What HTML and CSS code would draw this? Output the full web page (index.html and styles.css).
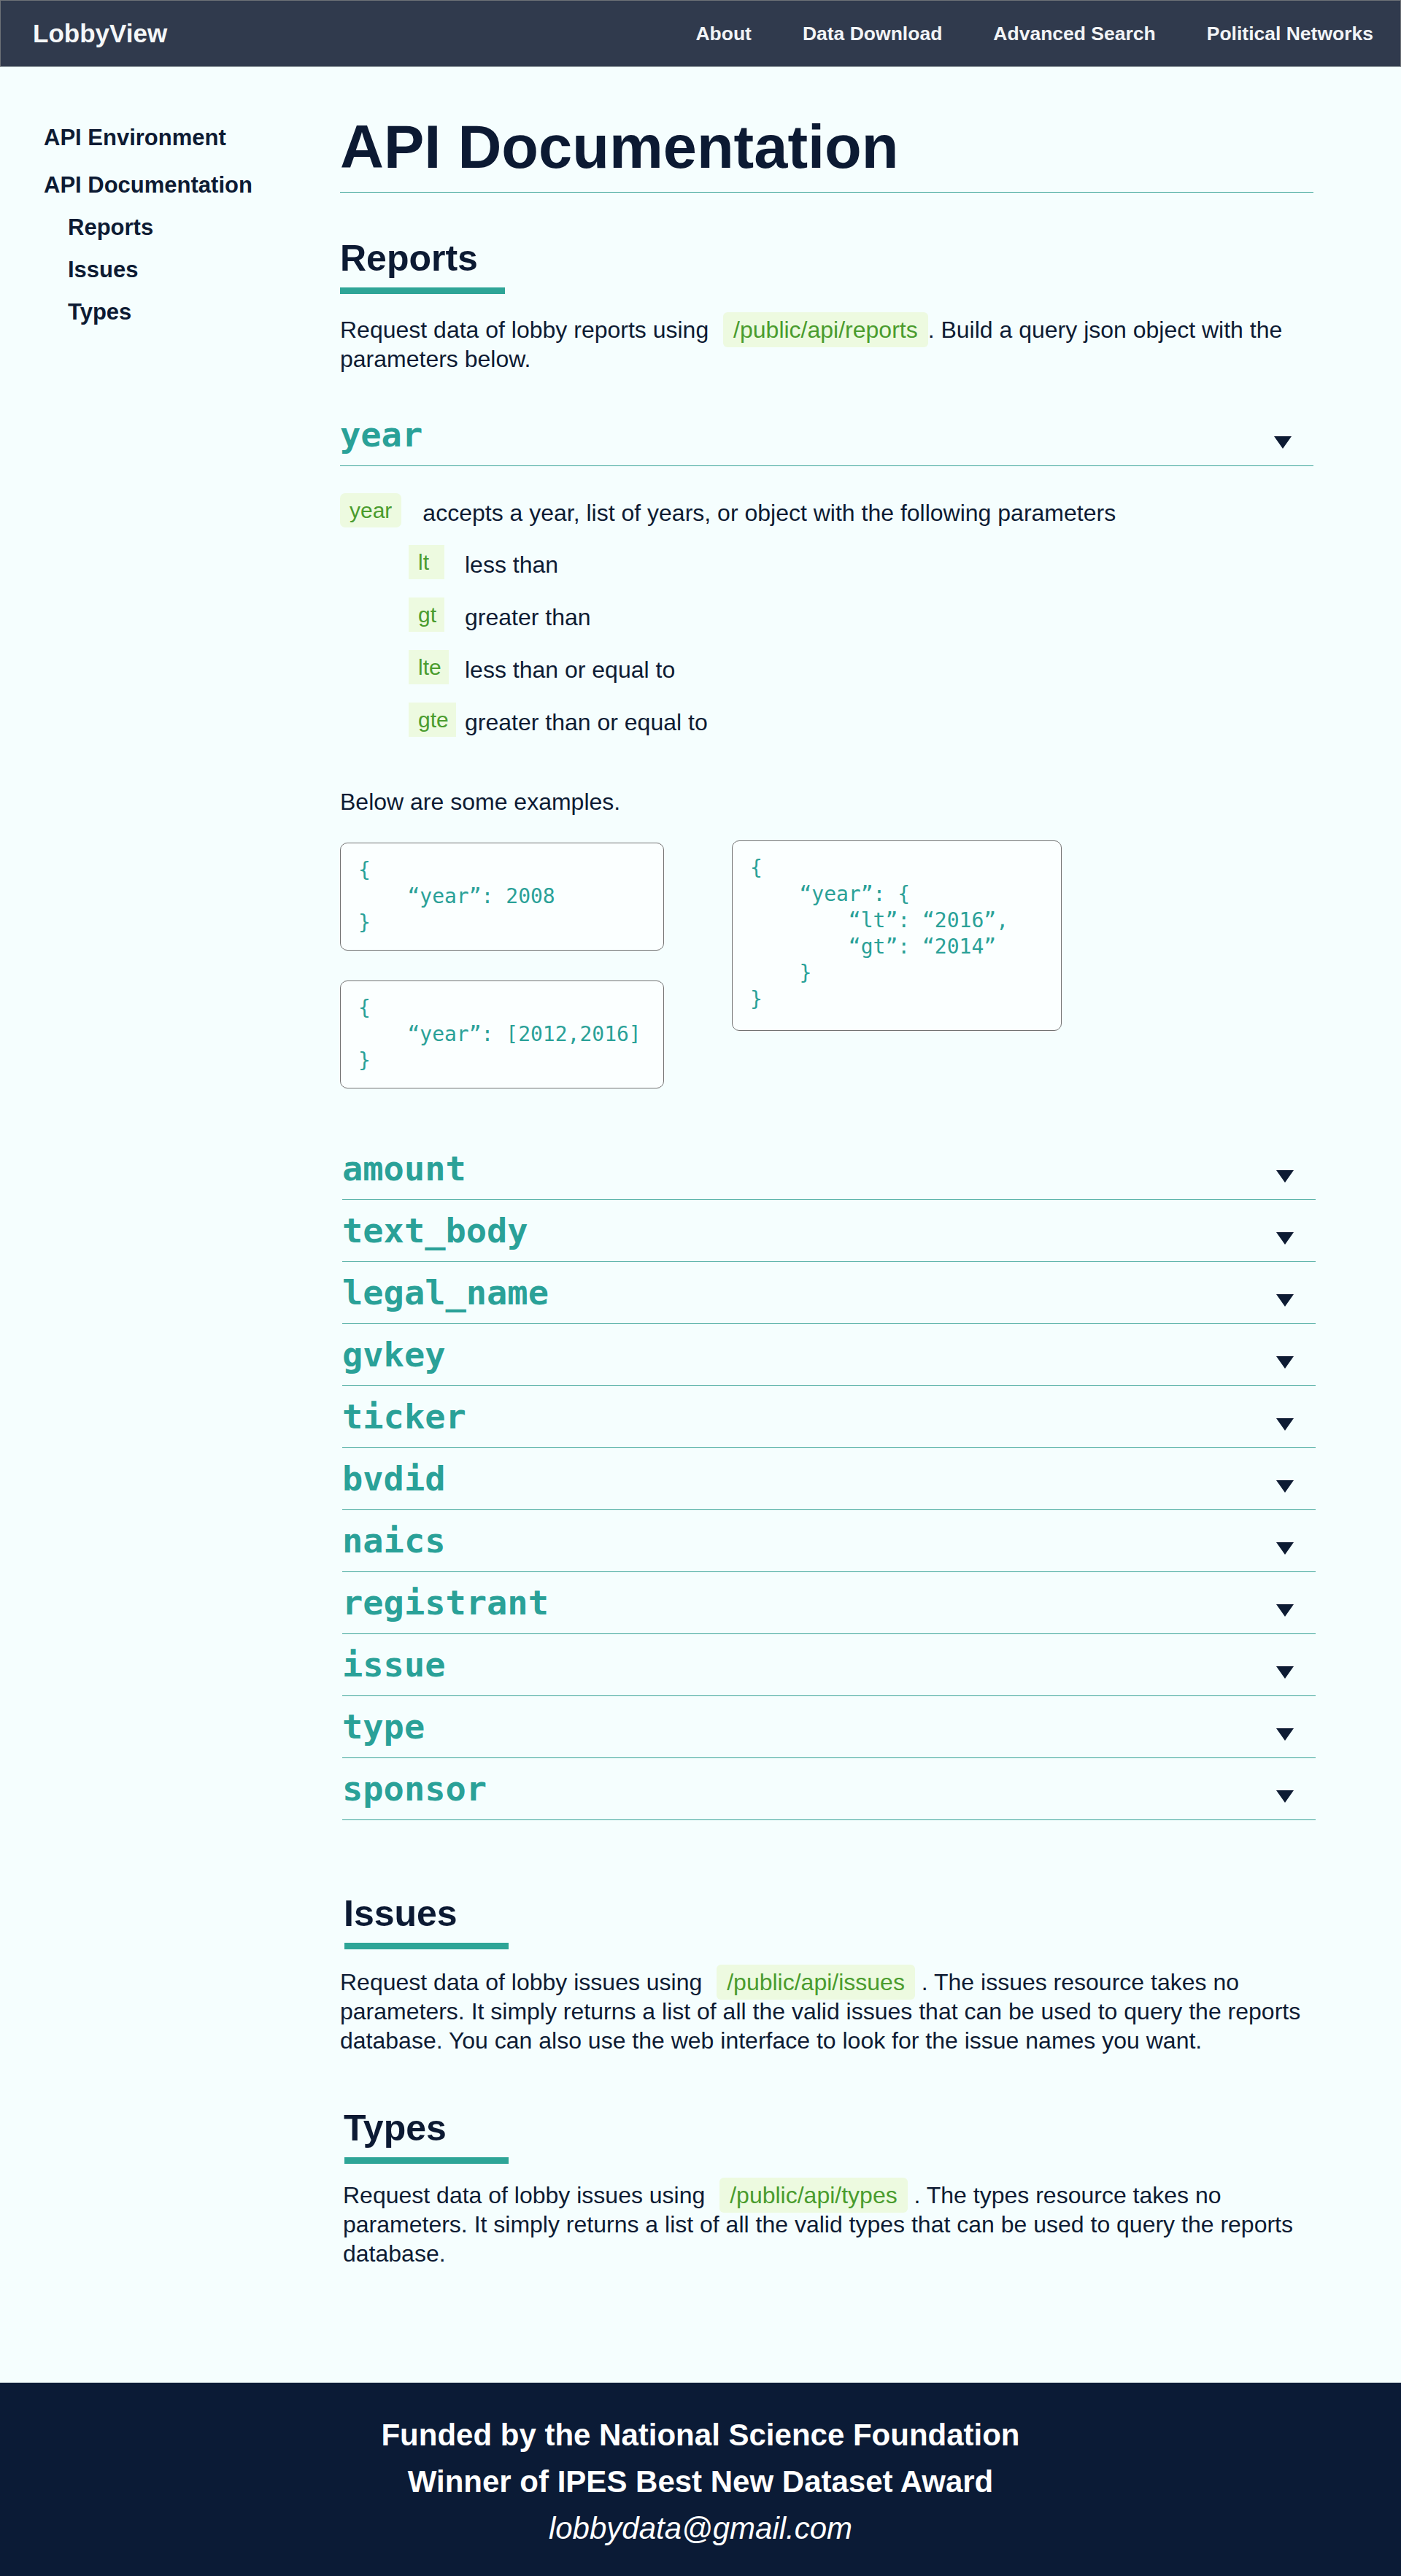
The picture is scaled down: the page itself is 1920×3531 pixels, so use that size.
FILE: index.html
```html
<!DOCTYPE html>
<html lang="en">
<head>
<meta charset="utf-8">
<title>LobbyView – API Documentation</title>
<link rel="stylesheet" href="styles.css">
</head>
<body>
<header class="topbar">
  <div class="brand">LobbyView</div>
  <nav class="topnav">
    <a class="topnav-link">About</a>
    <a class="topnav-link">Data Download</a>
    <a class="topnav-link">Advanced Search</a>
    <a class="topnav-link">Political Networks</a>
  </nav>
</header>

<div class="page">
  <aside class="sidebar">
    <a class="side-link side-link-first">API Environment</a>
    <a class="side-link">API Documentation</a>
    <a class="side-link side-sub">Reports</a>
    <a class="side-link side-sub">Issues</a>
    <a class="side-link side-sub">Types</a>
  </aside>

  <main class="content">
    <h1 class="title">API Documentation</h1>

    <section class="section section-reports">
      <h2 class="section-title">Reports</h2>
      <p class="text text-first">Request data of lobby reports using <code class="pill">/public/api/reports</code>. Build a query json object with the parameters below.</p>

      <div class="param param-open">
        <div class="param-head">
          <span class="param-name">year</span>
          <svg class="caret" width="24" height="17" viewBox="0 0 24 17"><path d="M0 0H24L12 17Z"/></svg>
        </div>
        <div class="param-body">
          <div class="param-intro">
            <code class="opt-pill opt-pill-round">year</code>
            <span class="opt-desc">accepts a year, list of years, or object with the following parameters</span>
          </div>
          <div class="opt-grid">
            <code class="opt-pill">lt</code><span class="opt-desc">less than</span>
            <code class="opt-pill">gt</code><span class="opt-desc">greater than</span>
            <code class="opt-pill">lte</code><span class="opt-desc">less than or equal to</span>
            <code class="opt-pill">gte</code><span class="opt-desc">greater than or equal to</span>
          </div>
          <p class="text examples-note">Below are some examples.</p>
          <div class="examples">
            <div class="ex-col">
<pre class="code-box">{
    “year”: 2008
}</pre>
<pre class="code-box">{
    “year”: [2012,2016]
}</pre>
            </div>
            <div class="ex-col">
<pre class="code-box code-box-wide">{
    “year”: {
        “lt”: “2016”,
        “gt”: “2014”
    }
}</pre>
            </div>
          </div>
        </div>
      </div>

      <div class="param-list">
        <div class="param-head"><span class="param-name">amount</span><svg class="caret" width="24" height="17" viewBox="0 0 24 17"><path d="M0 0H24L12 17Z"/></svg></div>
        <div class="param-head"><span class="param-name">text_body</span><svg class="caret" width="24" height="17" viewBox="0 0 24 17"><path d="M0 0H24L12 17Z"/></svg></div>
        <div class="param-head"><span class="param-name">legal_name</span><svg class="caret" width="24" height="17" viewBox="0 0 24 17"><path d="M0 0H24L12 17Z"/></svg></div>
        <div class="param-head"><span class="param-name">gvkey</span><svg class="caret" width="24" height="17" viewBox="0 0 24 17"><path d="M0 0H24L12 17Z"/></svg></div>
        <div class="param-head"><span class="param-name">ticker</span><svg class="caret" width="24" height="17" viewBox="0 0 24 17"><path d="M0 0H24L12 17Z"/></svg></div>
        <div class="param-head"><span class="param-name">bvdid</span><svg class="caret" width="24" height="17" viewBox="0 0 24 17"><path d="M0 0H24L12 17Z"/></svg></div>
        <div class="param-head"><span class="param-name">naics</span><svg class="caret" width="24" height="17" viewBox="0 0 24 17"><path d="M0 0H24L12 17Z"/></svg></div>
        <div class="param-head"><span class="param-name">registrant</span><svg class="caret" width="24" height="17" viewBox="0 0 24 17"><path d="M0 0H24L12 17Z"/></svg></div>
        <div class="param-head"><span class="param-name">issue</span><svg class="caret" width="24" height="17" viewBox="0 0 24 17"><path d="M0 0H24L12 17Z"/></svg></div>
        <div class="param-head"><span class="param-name">type</span><svg class="caret" width="24" height="17" viewBox="0 0 24 17"><path d="M0 0H24L12 17Z"/></svg></div>
        <div class="param-head"><span class="param-name">sponsor</span><svg class="caret" width="24" height="17" viewBox="0 0 24 17"><path d="M0 0H24L12 17Z"/></svg></div>
      </div>
    </section>

    <section class="section section-issues">
      <h2 class="section-title">Issues</h2>
      <p class="text">Request data of lobby issues using <code class="pill">/public/api/issues</code> . The issues resource takes no parameters. It simply returns a list of all the valid issues that can be used to query the reports database. You can also use the web interface to look for the issue names you want.</p>
    </section>

    <section class="section section-types">
      <h2 class="section-title">Types</h2>
      <p class="text">Request data of lobby issues using <code class="pill">/public/api/types</code> . The types resource takes no parameters. It simply returns a list of all the valid types that can be used to query the reports database.</p>
    </section>
  </main>
</div>

<footer class="footer">
  <p class="footer-line">Funded by the National Science Foundation</p>
  <p class="footer-line">Winner of IPES Best New Dataset Award</p>
  <p class="footer-line footer-mail">lobbydata@gmail.com</p>
</footer>
</body>
</html>
```

FILE: styles.css
```css
* { box-sizing: border-box; }

body {
  margin: 0;
  background: #f5fefe;
  color: #0d1b33;
  font-family: "Liberation Sans", Arial, Helvetica, sans-serif;
}

/* ---------- top bar ---------- */
.topbar {
  height: 92px;
  background: #303a4d;
  border: 1px solid #6d7176;
  border-bottom-color: #a9b3b5;
  display: flex;
  align-items: center;
  justify-content: space-between;
  padding: 0 37px 0 44px;
}
.brand {
  font-size: 35px;
  font-weight: bold;
  color: #f5f7f8;
}
.topnav {
  display: flex;
  gap: 70px;
}
.topnav-link {
  font-size: 26.5px;
  font-weight: bold;
  color: #f2f4f6;
}

/* ---------- layout ---------- */
.page {
  display: grid;
  grid-template-columns: 466px 1334px;
}

.sidebar {
  display: flex;
  flex-direction: column;
  gap: 18px;
  padding: 77px 0 0 60px;
}
.side-link {
  font-size: 31px;
  font-weight: bold;
  line-height: 40px;
  color: #0d1b33;
}
.side-link-first { margin-bottom: 7px; }
.side-sub { padding-left: 33px; }

.content {
  padding: 61px 0 157px;
}

.title {
  margin: 0;
  font-size: 83px;
  line-height: 98px;
  font-weight: bold;
  color: #0c1a33;
  padding-bottom: 12px;
  border-bottom: 1px solid #3aa397;
}

.section-title {
  margin: 60px 0 0;
  font-size: 50px;
  line-height: 60px;
  font-weight: bold;
  color: #0c1a33;
}
.section-title::after {
  content: "";
  display: block;
  width: 226px;
  height: 9px;
  margin-top: 10px;
  background: #2ea597;
}

.text {
  margin: 25px 0 0;
  font-size: 32px;
  line-height: 40px;
  color: #0d1b33;
}
.text-first { margin-top: 29px; }

.pill {
  font-family: inherit;
  font-size: 32px;
  background: #edfae0;
  color: #4a9c2e;
  padding: 6px 14px;
  border-radius: 6px;
  margin-left: 11px;
}

/* ---------- params ---------- */
.param { margin-top: 42px; }

.param-head {
  display: flex;
  justify-content: space-between;
  align-items: flex-end;
  padding: 19px 30px 19px 0;
  border-bottom: 1px solid #3aa397;
}
.param-name {
  font-family: "DejaVu Sans Mono", monospace;
  font-size: 47px;
  line-height: 46px;
  font-weight: bold;
  color: #2aa198;
}
.caret {
  display: block;
  margin-bottom: 4px;
  fill: #0d1b33;
}

.param-body { padding-top: 36px; }

.param-intro {
  display: flex;
  align-items: center;
  gap: 29px;
}
.opt-pill {
  font-family: inherit;
  font-size: 30px;
  line-height: 47px;
  height: 47px;
  min-width: 49px;
  padding: 0 10px 0 13px;
  background: #edfae0;
  color: #4a9c2e;
  justify-self: start;
}
.opt-pill-round {
  border-radius: 7px;
  padding: 0 13px;
}
.opt-desc {
  font-size: 32px;
  line-height: 40px;
  padding-top: 8px;
}

.opt-grid {
  display: grid;
  grid-template-columns: 68px 1fr;
  column-gap: 9px;
  row-gap: 24px;
  align-items: center;
  margin: 23px 0 0 94px;
}

.examples-note { margin-top: 69px; }

.examples {
  display: flex;
  align-items: flex-start;
  gap: 93px;
  margin-top: 36px;
}
.ex-col {
  display: flex;
  flex-direction: column;
  gap: 41px;
}
.code-box {
  margin: 0;
  width: 444px;
  border: 1px solid #727272;
  border-radius: 10px;
  padding: 19px 24px;
  background: #fbffff;
  font-family: "DejaVu Sans Mono", monospace;
  font-size: 28px;
  line-height: 36px;
  color: #2aa198;
  white-space: pre;
}
.code-box-wide {
  width: 452px;
  padding-bottom: 24px;
  margin-top: -3px;
}

.param-list {
  margin: 68px -3px 0 3px;
}

/* ---------- issues / types ---------- */
.section-issues .section-title { margin-top: 98px; padding-left: 5px; }
.section-issues .section-title::after { margin-left: 1px; width: 225px; }
.section-types { padding-left: 4px; }
.section-types .section-title { margin-top: 70px; padding-left: 1px; }
.section-types .section-title::after { margin-left: 1px; width: 225px; }
.section-types .text { margin-top: 23px; }

/* ---------- footer ---------- */
.footer {
  height: 267px;
  background: #0b1b36;
  color: #ffffff;
  text-align: center;
  padding-top: 40px;
}
.footer-line {
  margin: 0;
  font-size: 42px;
  line-height: 64px;
  font-weight: bold;
}
.footer-mail {
  font-weight: normal;
  font-style: italic;
}
```
